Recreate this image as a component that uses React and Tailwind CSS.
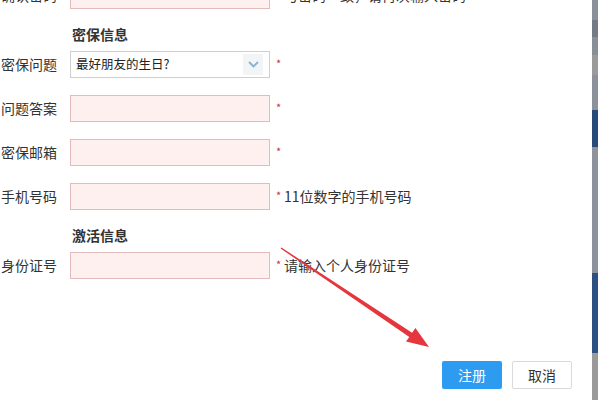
import React from 'react'

const FONT = { fontFamily: '"Noto Sans CJK SC", "Noto Sans", sans-serif' }

// colour bands of the page showing at the dialog's right edge
const STRIP = [
  ['h-[20px]', 'bg-[#8c9098]'],
  ['h-[17px]', 'bg-[#747a86]'],
  ['h-[18px]', 'bg-[#8a8e96]'],
  ['h-[20px]', 'bg-[#9b9b9b]'],
  ['h-[35px]', 'bg-[#8d9199]'],
  ['h-[37px]', 'bg-[#284b79]'],
  ['h-[126px]', 'bg-[#8e939b]'],
  ['h-[80px]', 'bg-[#2c5283]'],
  ['h-[47px]', 'bg-[#9a9a9a]'],
]

function Star() {
  return <span className="w-[14px] pl-[6px] text-[11px] leading-none text-[#c8323c] -mt-[3px]">*</span>
}

function Row({ label, hint, children }) {
  return (
    <div className="flex h-[27px] items-center">
      <div className="w-[57px] text-right text-[14px] text-[#333]">{label}</div>
      <div className="ml-[13px] w-[200px]">{children}</div>
      <Star />
      {hint && <span className="text-[14px] text-[#333]">{hint}</span>}
    </div>
  )
}

function Input() {
  return <div className="h-[27px] border border-[#e2bcbc] bg-[#fff0f0]" />
}

function Select() {
  return (
    <div className="flex h-[27px] items-center border border-[#cfcfcf] bg-white">
      <span className="flex-1 pl-[5px] text-[12.5px] text-[#222]">最好朋友的生日?</span>
      <span className="mr-[6px] flex h-[21px] w-[20px] items-center justify-center bg-[#f2f4f6]">
        <svg width="11" height="7" viewBox="0 0 11 7">
          <path d="M1 1 L5.5 5.5 L10 1" fill="none" stroke="#86b3d2" strokeWidth="1.8" />
        </svg>
      </span>
    </div>
  )
}

function Section({ title }) {
  return (
    <div className="mt-[15px] mb-[7px] flex h-[20px] items-center pl-[72px] text-[14px] font-bold text-[#333]">
      {title}
    </div>
  )
}

export default function App() {
  return (
    <div className="relative flex h-[400px] w-[598px] overflow-hidden bg-white" style={FONT}>
      <div className="flex w-[592px] flex-col">
        <div className="-mt-[18px] flex flex-col">
          <Row label="确认密码" hint="与密码一致，请再次输入密码">
            <Input />
          </Row>
          <Section title="密保信息" />
          <div className="flex flex-col gap-[17px]">
            <Row label="密保问题">
              <Select />
            </Row>
            <Row label="问题答案">
              <Input />
            </Row>
            <Row label="密保邮箱">
              <Input />
            </Row>
            <Row label="手机号码" hint="11位数字的手机号码">
              <Input />
            </Row>
          </div>
          <Section title="激活信息" />
          <Row label="身份证号" hint="请输入个人身份证号">
            <Input />
          </Row>
        </div>

        <div className="mt-auto mb-[11px] flex justify-end gap-[10px] pr-[20px]">
          <button className="h-[28px] w-[60px] rounded-[2px] bg-[#2d9cf0] text-[14px] text-white">注册</button>
          <button className="h-[28px] w-[60px] rounded-[2px] border border-[#dadada] bg-white text-[14px] text-[#333]">取消</button>
        </div>
      </div>

      <div className="flex w-[6px] flex-col">
        {STRIP.map(([h, c], i) => (
          <div key={i} className={`${h} ${c}`} />
        ))}
      </div>

      {/* red annotation arrow drawn over the form */}
      <svg className="pointer-events-none absolute left-0 top-0" width="598" height="400">
        <polygon
          points="280.6,248.5 409.3,336.9 406,341.6 429,347 415.4,328 412.1,332.7 281.4,247.5"
          fill="#e4363c"
        />
      </svg>
    </div>
  )
}
